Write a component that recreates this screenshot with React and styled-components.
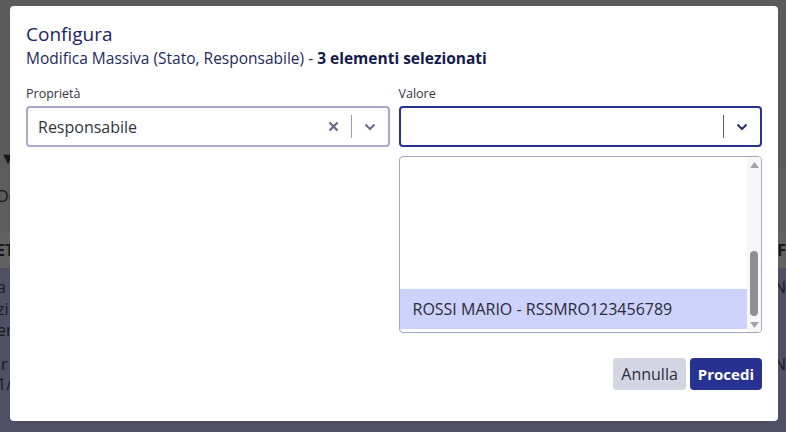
import React from 'react'
import styled, { createGlobalStyle } from 'styled-components'

const Global = createGlobalStyle`
  html, body { margin: 0; padding: 0; }
  body {
    font-family: "Open Sans", "Liberation Sans", sans-serif;
    width: 786px;
    height: 432px;
    overflow: hidden;
  }
`

// the dimmed page behind the dialog
const Page = styled.div`
  display: flex;
  flex-direction: column;
  height: 432px;
  background: #5b5b5b;
`

const Band = styled.div`
  display: flex;
  justify-content: space-between;
  align-items: center;
  height: ${p => p.h}px;
  flex-shrink: 0;
  background: ${p => p.bg || 'transparent'};
  color: #17171f;
  font-size: 16px;
  font-weight: ${p => (p.bold ? 700 : 400)};
  white-space: nowrap;
  overflow: hidden;
`

const EdgeText = styled.span`
  text-indent: ${p => p.shift || 0}px;
  display: block;
`

const RowList = styled.div`
  flex: 1;
  display: flex;
  flex-direction: column;
  padding-top: 8px;
  background: #4f5066;
`

const Overlay = styled.div`
  position: fixed;
  inset: 0;
  padding: 6px 8px 0 10px;
`

const Dialog = styled.div`
  width: 768px;
  height: 415px;
  box-sizing: border-box;
  background: #fff;
  border-radius: 4px;
  padding: 14px 16px 0 16px;
  display: flex;
  flex-direction: column;
`

const Title = styled.h2`
  margin: 0;
  font-size: 19px;
  line-height: 28px;
  font-weight: 400;
  color: #1c2461;
`

const Subtitle = styled.p`
  margin: 0;
  font-size: 15.5px;
  line-height: 20px;
  color: #1f2a5a;

  b {
    font-weight: 700;
    color: #131a4a;
  }
`

const Fields = styled.div`
  display: grid;
  grid-template-columns: 1fr 1fr;
  column-gap: 9px;
  margin-top: 18px;
`

const Field = styled.div`
  display: flex;
  flex-direction: column;
`

const Label = styled.label`
  font-size: 12.5px;
  line-height: 16px;
  color: #333340;
  margin-bottom: 4px;
`

const Control = styled.div`
  height: 41px;
  box-sizing: border-box;
  border: 2px solid ${p => (p.focused ? '#27318f' : '#a9a9c9')};
  border-radius: 4px;
  display: flex;
  align-items: center;
  padding-left: 10px;
`

const Value = styled.span`
  flex: 1;
  font-size: 16px;
  color: #33333d;
`

const IconButton = styled.span`
  display: flex;
  align-items: center;
  justify-content: center;
  width: ${p => p.w}px;
  height: 100%;
`

const Separator = styled.span`
  width: 1px;
  height: 23px;
  background: ${p => p.color};
`

const ListBox = styled.div`
  margin-top: 9px;
  height: 177px;
  box-sizing: border-box;
  border: 1px solid #a5a5c8;
  border-radius: 4px;
  display: flex;
  overflow: hidden;
`

const Options = styled.div`
  flex: 1;
  display: flex;
  flex-direction: column;
  justify-content: flex-end;
  padding-bottom: 3px;
`

const Option = styled.div`
  height: 40px;
  display: flex;
  align-items: center;
  padding-left: 13px;
  font-size: 16px;
  color: #2a2a3c;
  background: ${p => (p.selected ? '#cdd2fb' : 'transparent')};
`

const Scrollbar = styled.div`
  width: 14px;
  background: #f7f7f7;
  display: flex;
  flex-direction: column;
  align-items: center;
`

const Arrow = styled.span`
  height: 15px;
  display: flex;
  align-items: center;
  justify-content: center;
`

const Track = styled.div`
  flex: 1;
  display: flex;
  flex-direction: column;
  justify-content: flex-end;
  padding-bottom: 1px;
`

const Thumb = styled.div`
  width: 8px;
  height: 65px;
  border-radius: 4px;
  background: #8f8f8f;
`

const Footer = styled.div`
  display: flex;
  justify-content: flex-end;
  gap: 4px;
  margin-top: 25px;
`

const Button = styled.button`
  height: 32px;
  padding: 0 8px;
  border: none;
  border-radius: 4px;
  font-family: inherit;
  font-size: ${p => (p.primary ? 15 : 16)}px;
  font-weight: ${p => (p.primary ? 700 : 400)};
  color: ${p => (p.primary ? '#fff' : '#2d2d3d')};
  background: ${p => (p.primary ? '#27318f' : '#d4d5e3')};
`

const Chevron = ({ color }) => (
  <svg width="12" height="8" viewBox="0 0 12 8">
    <path d="M1.5 1.5 L6 6 L10.5 1.5" fill="none" stroke={color} strokeWidth="2" />
  </svg>
)

const Cross = ({ color }) => (
  <svg width="11" height="11" viewBox="0 0 11 11">
    <path d="M1.5 1.5 L9.5 9.5 M9.5 1.5 L1.5 9.5" fill="none" stroke={color} strokeWidth="2.4" />
  </svg>
)

const Tri = ({ up }) => (
  <svg width="9" height="6" viewBox="0 0 9 6">
    <path d={up ? 'M0 6 L4.5 0 L9 6 Z' : 'M0 0 L4.5 6 L9 0 Z'} fill="#a3a3a3" />
  </svg>
)

const rows = [
  { h: 22, l: 'a', r: 'N' },
  { h: 22, l: 'zi', r: '' },
  { h: 20, l: 'er', r: '' },
  { h: 14, l: '', r: '' },
  { h: 20, l: 'ir', r: 'N' },
  { h: 20, l: '1/2', r: '' },
]

export default function App() {
  return (
    <>
      <Global />
      <Page>
        <Band h={146} />
        <Band h={24}>
          <EdgeText>▼</EdgeText>
        </Band>
        <Band h={52} bg="#5d5d5d">
          <EdgeText shift={-3}>De</EdgeText>
        </Band>
        <Band h={10} bg="#5d5d5d" />
        <Band h={36} bg="#616161" bold>
          <EdgeText shift={-4}>ET</EdgeText>
          <EdgeText>IF</EdgeText>
        </Band>
        <RowList>
          {rows.map((r, i) => (
            <Band key={i} h={r.h}>
              <EdgeText shift={-3}>{r.l}</EdgeText>
              <EdgeText>{r.r}</EdgeText>
            </Band>
          ))}
        </RowList>
      </Page>

      <Overlay>
        <Dialog>
          <Title>Configura</Title>
          <Subtitle>
            Modifica Massiva (Stato, Responsabile) - <b>3 elementi selezionati</b>
          </Subtitle>

          <Fields>
            <Field>
              <Label>Proprietà</Label>
              <Control>
                <Value>Responsabile</Value>
                <IconButton w={34}>
                  <Cross color="#6b6b8a" />
                </IconButton>
                <Separator color="#9c9cb8" />
                <IconButton w={36}>
                  <Chevron color="#6b6b8a" />
                </IconButton>
              </Control>
            </Field>

            <Field>
              <Label>Valore</Label>
              <Control focused>
                <Value />
                <Separator color="#5a5a78" />
                <IconButton w={36}>
                  <Chevron color="#2a2f66" />
                </IconButton>
              </Control>
              <ListBox>
                <Options>
                  <Option selected>ROSSI MARIO - RSSMRO123456789</Option>
                </Options>
                <Scrollbar>
                  <Arrow><Tri up /></Arrow>
                  <Track><Thumb /></Track>
                  <Arrow><Tri /></Arrow>
                </Scrollbar>
              </ListBox>
            </Field>
          </Fields>

          <Footer>
            <Button>Annulla</Button>
            <Button primary>Procedi</Button>
          </Footer>
        </Dialog>
      </Overlay>
    </>
  )
}
